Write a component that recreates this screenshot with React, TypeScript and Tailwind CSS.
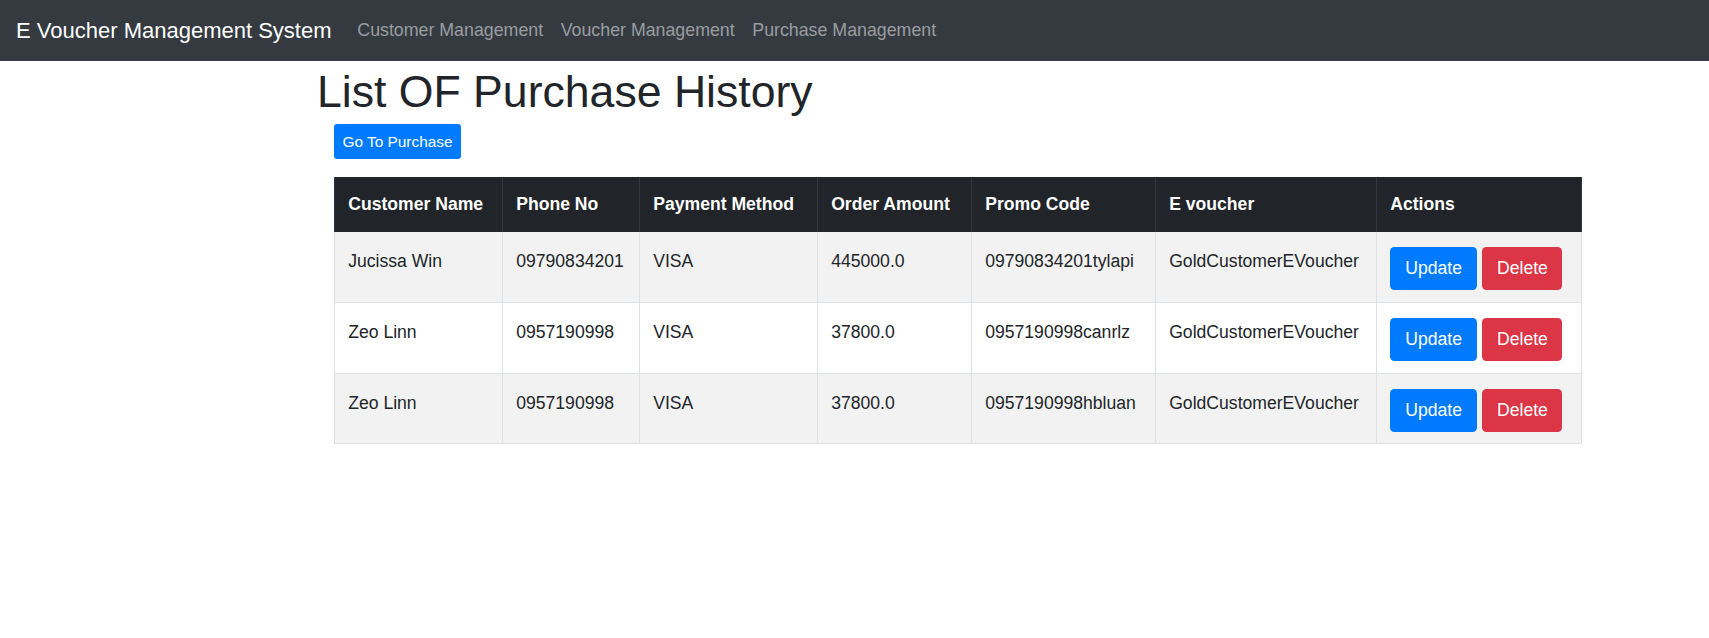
import React from "react";

const cols = "grid grid-cols-[168px_137px_178px_154px_184px_221px_206px]";

const headers = ["Customer Name", "Phone No", "Payment Method", "Order Amount", "Promo Code", "E voucher", "Actions"];

const rows = [
  ["Jucissa Win", "09790834201", "VISA", "445000.0", "09790834201tylapi", "GoldCustomerEVoucher"],
  ["Zeo Linn", "0957190998", "VISA", "37800.0", "0957190998canrlz", "GoldCustomerEVoucher"],
  ["Zeo Linn", "0957190998", "VISA", "37800.0", "0957190998hbluan", "GoldCustomerEVoucher"],
];

export default function App() {
  return (
    <div className="min-h-[638px] bg-white text-[#212529] font-['Liberation_Sans',Arial,sans-serif]">
      <nav className="h-[61px] bg-[#343a40] flex items-center pl-[16px]">
        <span className="text-[22px] leading-[33px] text-white mr-[17px]">E Voucher Management System</span>
        <a className="text-[17.8px] leading-[26.4px] text-[#9a9da0] px-[8.8px]">Customer Management</a>
        <a className="text-[17.8px] leading-[26.4px] text-[#9a9da0] px-[8.8px]">Voucher Management</a>
        <a className="text-[17.8px] leading-[26.4px] text-[#9a9da0] px-[8.8px]">Purchase Management</a>
      </nav>
      <div className="pl-[317px]">
        <h1 className="mt-[4px] text-[44.6px] leading-[53px] font-medium text-[#212529]">List OF Purchase History</h1>
      </div>
      <div className="pl-[334px]">
        <button className="mt-[6px] w-[127px] h-[35px] bg-[#007bff] text-white text-[15.4px] rounded-[3.3px] flex items-center justify-center">
          Go To Purchase
        </button>
        <div className="mt-[18px] w-[1248px]">
          <div className={`${cols} h-[55px] bg-[#212529] text-white font-bold text-[17.6px] leading-[26.4px]`}>
            {headers.map((h, i) => (
              <div key={h} className={`border-l border-[#32383e] pl-[13.2px] pt-[14.4px] ${i === 6 ? "border-r" : ""}`}>
                {h}
              </div>
            ))}
          </div>
          {rows.map((r, ri) => (
            <div
              key={ri}
              className={`${cols} ${ri === 2 ? "h-[70px]" : "h-[71px]"} border-b border-[#dee2e6] text-[17.6px] leading-[26.4px] ${ri % 2 === 0 ? "bg-[#f2f2f2]" : "bg-white"}`}
            >
              {r.map((c, ci) => (
                <div key={ci} className="border-l border-[#dee2e6] pl-[13.2px] pt-[16px]">
                  {c}
                </div>
              ))}
              <div className="border-l border-r border-[#dee2e6] pl-[13.2px] pt-[14.7px] flex gap-[5.3px] items-start">
                <button className="w-[87px] h-[43px] bg-[#007bff] text-white text-[17.6px] rounded-[4.4px] flex items-center justify-center">
                  Update
                </button>
                <button className="w-[80px] h-[43px] bg-[#dc3545] text-white text-[17.6px] rounded-[4.4px] flex items-center justify-center">
                  Delete
                </button>
              </div>
            </div>
          ))}
        </div>
      </div>
    </div>
  );
}
